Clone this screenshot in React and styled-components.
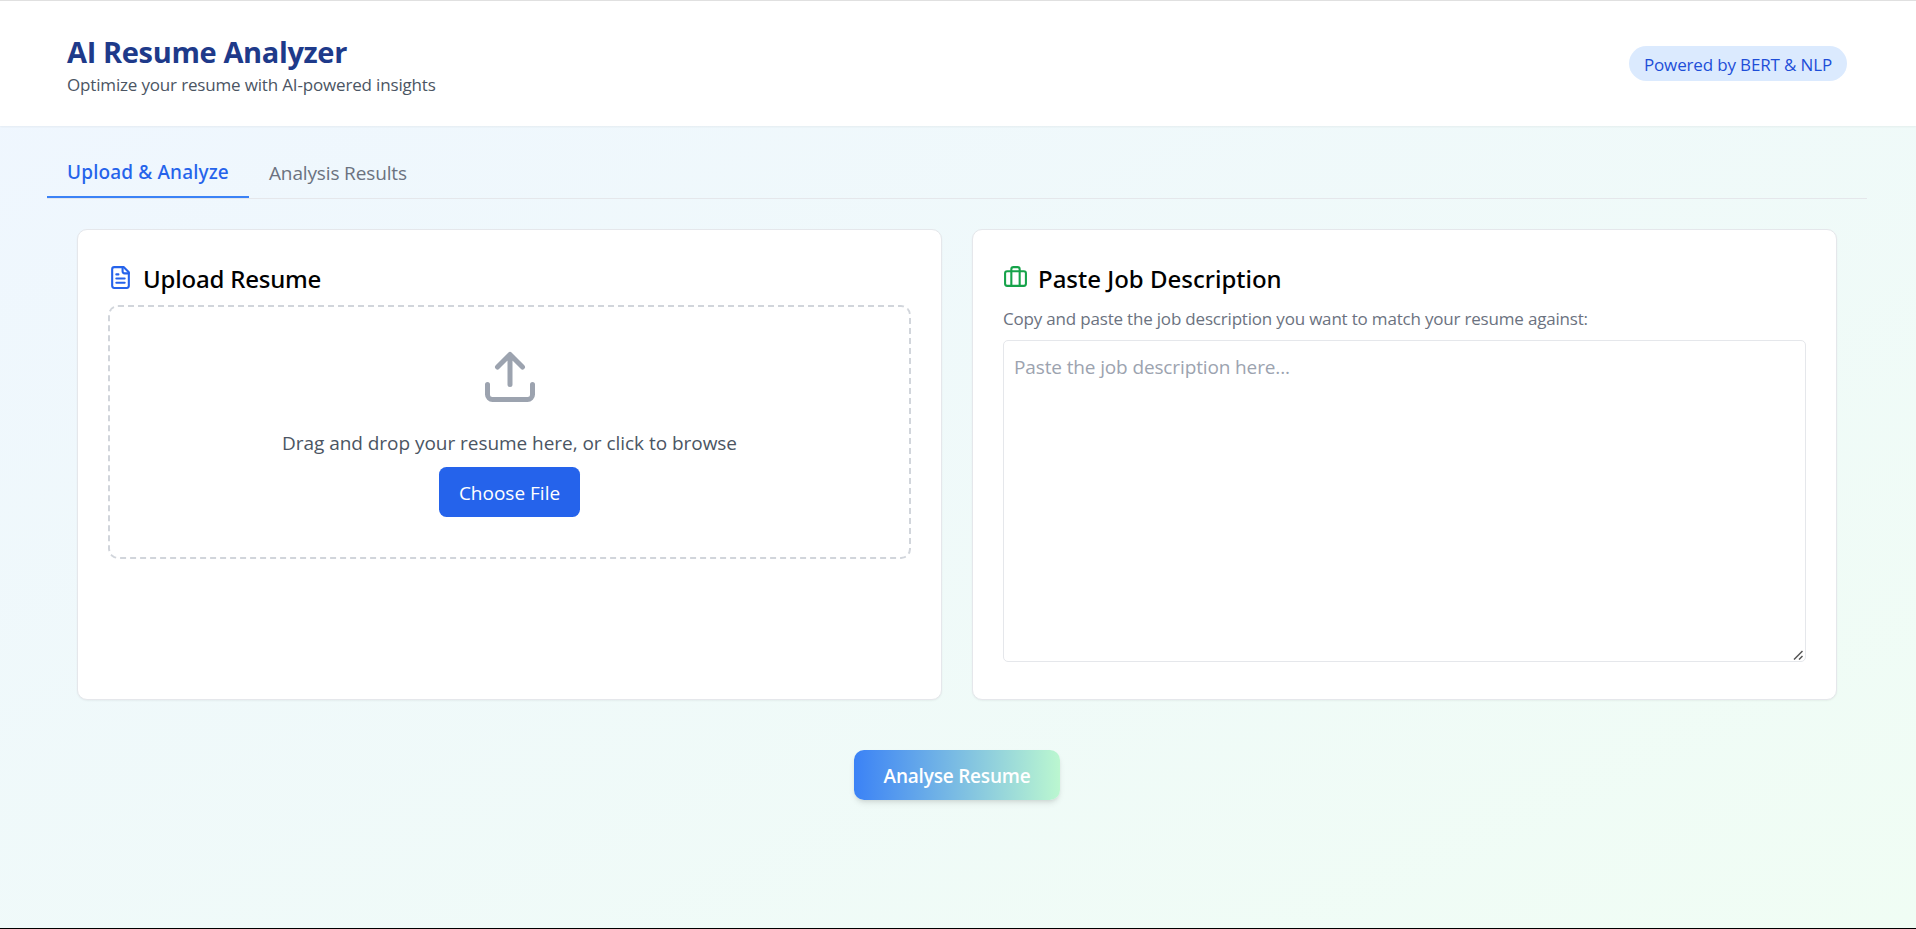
import React, { useState } from "react";
import styled, { createGlobalStyle, css } from "styled-components";

const GlobalStyle = createGlobalStyle`
  *, *::before, *::after { box-sizing: border-box; }
  html { background: #000; }
  body {
    margin: 0;
    font-family: "Open Sans", "Noto Sans", sans-serif;
    color: #000;
    overflow: hidden;
  }
  h1, h2, p { margin: 0; }
  button, textarea { font-family: inherit; }
`;

const Page = styled.div`
  height: 928px;
  border-top: 1px solid #e0e0e0;
  background: linear-gradient(to bottom right, #eff6ff, #f0fdf4);
`;

const Header = styled.header`
  height: 125px;
  padding: 30px 69px 30px 67px;
  display: flex;
  align-items: center;
  justify-content: space-between;
  background: #fff;
  box-shadow: 0 1px 2px rgba(0, 0, 0, 0.05);
`;

const Brand = styled.h1`
  font-size: 29px;
  line-height: 42px;
  font-weight: 700;
  letter-spacing: -0.36px;
  color: #1e3a8a;
`;

const Tagline = styled.p`
  font-size: 17px;
  line-height: 23px;
  letter-spacing: -0.165px;
  color: #4b5563;
`;

const Badge = styled.span`
  width: 218px;
  height: 35px;
  padding-top: 1px;
  border-radius: 18px;
  background: #dbeafe;
  color: #1d4ed8;
  font-size: 17px;
  line-height: 36px;
  letter-spacing: -0.15px;
  text-align: center;
  white-space: nowrap;
`;

const Main = styled.main`
  padding: 20px 49px 0 47px;
`;

const Tabs = styled.nav`
  display: flex;
  height: 53px;
  border-bottom: 1px solid #e5e7eb;
`;

const Tab = styled.button`
  height: 52px;
  padding: 2px 20px 0;
  border: 0;
  background: none;
  font-size: 19px;
  line-height: 30px;
  letter-spacing: -0.14px;
  color: #6b7280;
  white-space: nowrap;
  ${(p) =>
    p.$active &&
    css`
      width: 202px;
      border-bottom: 2px solid #3b82f6;
      font-family: "Noto Sans", sans-serif;
      font-weight: 500;
      letter-spacing: 0.15px;
      color: #2563eb;
    `}
`;

const Panels = styled.section`
  display: grid;
  grid-template-columns: 1fr 1fr;
  gap: 30px;
  padding: 30px 30px 0;
`;

const Card = styled.article`
  height: 471px;
  padding: 30px;
  border: 1px solid #e5e7eb;
  border-radius: 10px;
  background: #fff;
  box-shadow: 0 1px 2px rgba(0, 0, 0, 0.05);
`;

const CardHeading = styled.div`
  display: flex;
  align-items: flex-start;
  gap: 10px;
  height: 45px;
`;

const CardTitle = styled.h2`
  font-family: "Noto Sans", sans-serif;
  font-size: 24px;
  line-height: 37px;
  font-weight: 500;
  letter-spacing: ${(p) => p.$tracking || "0"};
`;

const Icon = styled.svg`
  width: ${(p) => p.$size}px;
  height: ${(p) => p.$size}px;
  margin-top: ${(p) => p.$top || 0}px;
  flex: none;
  fill: none;
  stroke: ${(p) => p.$color};
  stroke-width: 2;
  stroke-linecap: round;
  stroke-linejoin: round;
`;

const DropZone = styled.div`
  height: 254px;
  border: 2px dashed #d1d5db;
  border-radius: 10px;
  display: flex;
  flex-direction: column;
  align-items: center;
  padding-top: 40px;
`;

const DropText = styled.p`
  margin: 21px 0 9px;
  font-size: 19px;
  line-height: 30px;
  letter-spacing: -0.04px;
  color: #4b5563;
`;

const FileButton = styled.button`
  width: 141px;
  height: 50px;
  padding: 2px 0 0;
  border: 0;
  border-radius: 7.5px;
  background: #2563eb;
  color: #fff;
  font-size: 19px;
  line-height: 30px;
`;

const Hint = styled.p`
  padding-top: 1px;
  margin-bottom: 9px;
  font-size: 17px;
  line-height: 25px;
  letter-spacing: -0.19px;
  color: #6b7280;
`;

const InputFrame = styled.div`
  position: relative;
`;

const JobInput = styled.textarea`
  display: block;
  width: 100%;
  height: 322px;
  padding: 11px 10px 10px;
  border: 1px solid #e5e7eb;
  border-radius: 5px;
  background: #fff;
  outline: 0;
  resize: none;
  font-size: 19px;
  line-height: 30px;
  letter-spacing: -0.13px;
  &::placeholder {
    color: #9ca3af;
  }
`;

const ResizeGrip = styled.svg`
  position: absolute;
  right: 3px;
  bottom: 2px;
  width: 10px;
  height: 10px;
  fill: none;
  stroke: #555;
  stroke-width: 1.5;
  pointer-events: none;
`;

const Actions = styled.div`
  display: flex;
  justify-content: center;
  padding-top: 50px;
`;

const AnalyseButton = styled.button`
  width: 206px;
  height: 50px;
  padding: 2px 0 0;
  border: 0;
  border-radius: 10px;
  background: linear-gradient(to right, #3b82f6, #bbf7d0);
  box-shadow: 0 4px 6px -1px rgba(0, 0, 0, 0.1), 0 2px 4px -2px rgba(0, 0, 0, 0.1);
  color: #fff;
  font-size: 19px;
  line-height: 30px;
  font-weight: 600;
  letter-spacing: -0.2px;
`;

const FileTextIcon = () => (
  <Icon viewBox="0 0 24 24" $size={25} $top={5} $color="#2563eb">
    <path d="M15 2H6a2 2 0 0 0-2 2v16a2 2 0 0 0 2 2h12a2 2 0 0 0 2-2V7Z" />
    <path d="M14 2v4a2 2 0 0 0 2 2h4" />
    <path d="M10 9H8M16 13H8M16 17H8" />
  </Icon>
);

const BriefcaseIcon = () => (
  <Icon viewBox="0 0 24 24" $size={25} $top={5} $color="#16a34a">
    <path d="M16 20V4a2 2 0 0 0-2-2h-4a2 2 0 0 0-2 2v16" />
    <rect width="20" height="14" x="2" y="6" rx="2" />
  </Icon>
);

const UploadIcon = () => (
  <Icon viewBox="0 0 24 24" $size={60} $color="#9ca3af">
    <path d="M21 15v4a2 2 0 0 1-2 2H5a2 2 0 0 1-2-2v-4" />
    <path d="M17 8l-5-5-5 5M12 3v12" />
  </Icon>
);

export default function App() {
  const [tab, setTab] = useState("upload");
  const [job, setJob] = useState("");

  return (
    <>
      <GlobalStyle />
      <Page>
        <Header>
          <div>
            <Brand>AI Resume Analyzer</Brand>
            <Tagline>Optimize your resume with AI-powered insights</Tagline>
          </div>
          <Badge>Powered by BERT &amp; NLP</Badge>
        </Header>
        <Main>
          <Tabs>
            <Tab $active={tab === "upload"} onClick={() => setTab("upload")}>
              Upload &amp; Analyze
            </Tab>
            <Tab $active={tab === "results"} onClick={() => setTab("results")}>
              Analysis Results
            </Tab>
          </Tabs>
          <Panels>
            <Card>
              <CardHeading>
                <FileTextIcon />
                <CardTitle $tracking="-0.2px">Upload Resume</CardTitle>
              </CardHeading>
              <DropZone>
                <UploadIcon />
                <DropText>Drag and drop your resume here, or click to browse</DropText>
                <FileButton>Choose File</FileButton>
              </DropZone>
            </Card>
            <Card>
              <CardHeading>
                <BriefcaseIcon />
                <CardTitle>Paste Job Description</CardTitle>
              </CardHeading>
              <Hint>Copy and paste the job description you want to match your resume against:</Hint>
              <InputFrame>
                <JobInput
                  placeholder="Paste the job description here..."
                  value={job}
                  onChange={(e) => setJob(e.target.value)}
                />
                <ResizeGrip viewBox="0 0 10 10">
                  <path d="M1 9.5L9.5 1M6 9.5L9.5 6" />
                </ResizeGrip>
              </InputFrame>
            </Card>
          </Panels>
          <Actions>
            <AnalyseButton>Analyse Resume</AnalyseButton>
          </Actions>
        </Main>
      </Page>
    </>
  );
}
